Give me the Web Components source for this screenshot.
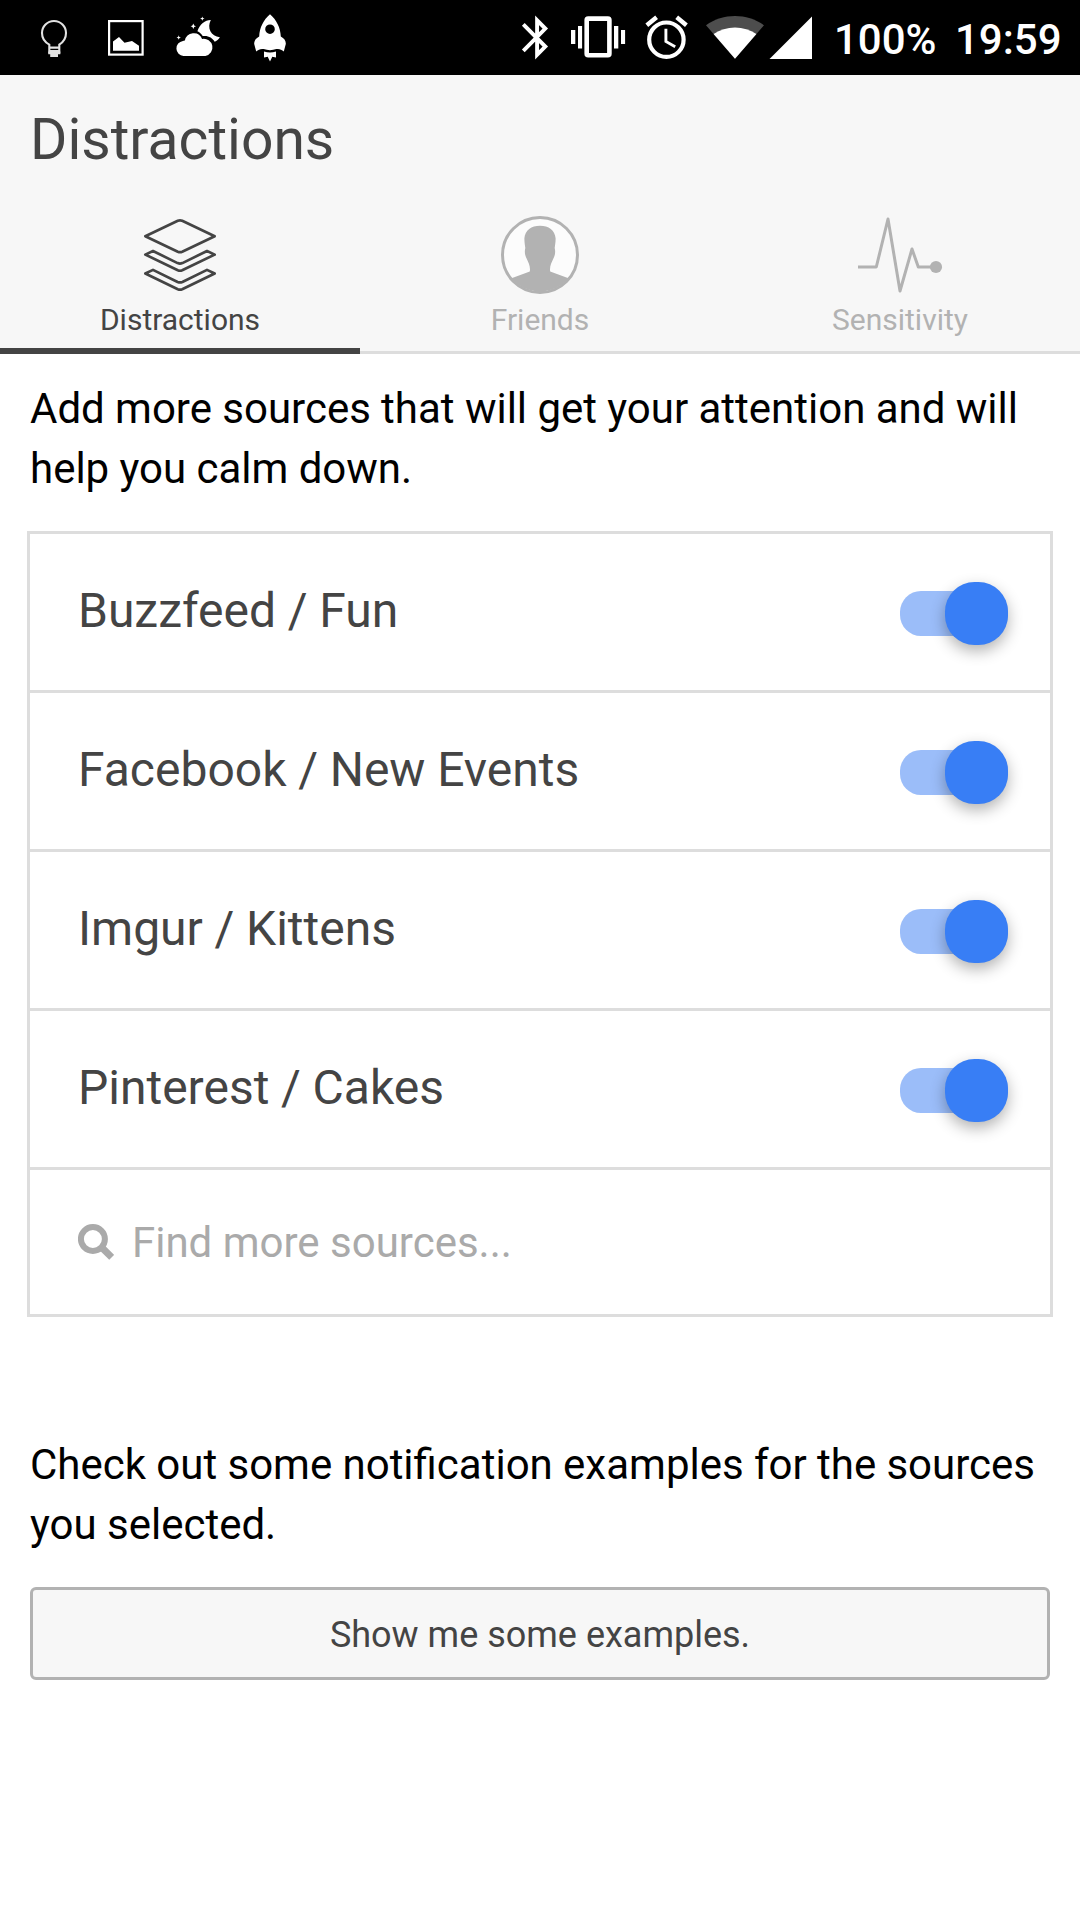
<!DOCTYPE html>
<html lang="en">
<head>
<meta charset="utf-8">
<title>Distractions</title>
<style>
html,body{margin:0;padding:0;background:#fff}
body{font-family:Roboto,"Noto Sans",sans-serif;color:#000}
</style>
</head>
<body>
<distractions-app></distractions-app>
<script>
// Icon table: [viewBox x, y, width, height, markup]
const ICONS = {
  bulb: [34,16,40,44,`<g fill="none" stroke="#e2e2e2" stroke-width="2.1"><path d="M49.3 53.5V44.6C45 42.3 42 38 42 33a12 12 0 0 1 24 0c0 5-3 9.300-6.700 11.600V53.500M49.300 47.600h10M49.300 51h10"/></g><path d="M48.300 51.500h12v2.800h-2.300v2.800h-7.800v-2.800h-1.900z" fill="#e2e2e2"/>`],
  image: [106,16,40,44,`<rect x="109.100" y="21.100" width="33.500" height="33.500" fill="none" stroke="#fff" stroke-width="2.200"/><path d="M113 50.700V41.500L119 37l5.500 5.800 7.500-1.800 7 4.700v5z" fill="#fff"/>`],
  weather: [174,14,48,46,`<g fill="#fff"><path d="M183.500 56a7.600 7.600 0 0 1-.6-15.100 5 5 0 0 1 2-.3 9 9 0 0 1 17.200-1.700 8.700 8.700 0 1 1 3.300 17.100z"/><path d="M210.800 20c-5.300-.2-11 4-13.400 11.300 2.200 1 4 2.500 5.300 4.800 5-.9 9.700 1.300 12 5.700 2-.9 3.900-2.500 5.200-4.600-9-.8-13.200-9.400-9.100-17.200z"/><path d="M202.300 16.500l.6 1.500 1.600.6-1.600.6-.6 1.500-.6-1.500-1.600-.6 1.600-.6zM193.300 23.500l.9 2 1.800.8-1.800.8-.9 2-.9-2-1.800-.8 1.800-.8zM178.700 35.300l.6 1.700 1.600.6-1.600.6-.6 1.600-.6-1.600-1.600-.6 1.600-.6z"/></g>`],
  rocket: [250,12,40,50,`<path fill="#fff" fill-rule="evenodd" d="M270 14.300c6.500 5.500 10.500 13.500 10.800 22.200 3.500 1.800 5.200 4.500 5 7.500l-2 7.400c-2.200-2-4.800-2.900-7.500-2.300-4 1.500-8.600 1.500-12.600 0-2.700-.6-5.300.3-7.500 2.300l-2-7.400c-.2-3 1.500-5.700 5-7.500.3-8.700 4.300-16.700 10.800-22.200zM270 24.400a4.800 4.800 0 1 0 0 9.600 4.800 4.800 0 0 0 0-9.600zM264 51.500c4 1.200 8 1.200 12 0v6l-3.700-.7-2.300 4.700-2.300-4.700-3.700.7z"/>`],
  bluetooth: [520,14,30,48,`<path fill="none" stroke="#fff" stroke-width="3.900" d="M523.300 24.300l22 22.300-8.200 8.200V20.300l8.200 8.200-22 22.400"/>`],
  vibrate: [568,14,60,48,`<rect x="586.700" y="18.600" width="22.700" height="36.600" rx="1.500" fill="none" stroke="#fff" stroke-width="4.600"/><path fill="#fff" d="M578 26h4.100v22.400H578zM571 30h4.300v14H571zM614 26h4.300v22.400H614zM621 30h4.100v14H621z"/>`],
  alarm: [644,14,46,48,`<g fill="none" stroke="#fff"><circle cx="666.400" cy="39.700" r="17.200" stroke-width="4.200"/><path stroke-width="2.900" d="M665.900 28.700v12.800l9.300 5.200"/><path stroke-width="4.400" d="M646.800 25.200l9.800-7.900M676.700 17.300l9.700 7.900"/></g>`],
  wifi: [704,14,62,48,`<path fill="#4d4d4d" d="M735 58.700L706 25.300C714.500 19 725 16 735 16s20.500 3 29 9.300z"/><path fill="#fff" d="M735 58.700L713.600 34c6.200-4.300 13.600-6.500 21.400-6.500s15.200 2.200 21.400 6.500z"/>`],
  signal: [768,14,46,48,`<path fill="#fff" d="M769.500 59L812 16.500V59z"/>`],
  layers: [135,212,90,84,`<g fill="none" stroke="currentColor" stroke-width="2.700" stroke-linejoin="round"><path d="M145.300 236.200l32.500-15.400q2.200-.8 4.400 0l32.500 15.400-32.500 15.500q-2.200.9-4.400 0z"/><path d="M145.300 254.600l7.700-3.600 24.600 12.100q2.400.9 4.800 0L207 251l7.700 3.600-32.500 15.700q-2.200.9-4.400 0z"/><path d="M145.300 273.500l7.700-3.600 24.600 12.100q2.400.9 4.800 0l24.600-12.100 7.700 3.600-32.500 15.700q-2.200.9-4.400 0z"/></g>`],
  person: [495,212,90,84,`<circle cx="540" cy="255" r="37.500" fill="#fcfcfc" stroke="currentColor" stroke-width="3"/><path fill="currentColor" d="M511.500 278.200l18.300-6.800c.8-5-1.200-8.400-3.200-12.900-1.600-3-2.300-6.200-1.300-10.500-.4-3.500-1-6.400-.9-9.800.6-7.900 7-12.500 15.600-12.500s15 4.600 15.600 12.500c.1 3.400-.5 6.300-.9 9.800 1 4.300.3 7.500-1.300 10.500-2 4.500-4 7.900-3.200 12.900l18.300 6.800A37.500 37.500 0 0 1 511.500 278.200z"/>`],
  pulse: [855,212,90,84,`<path fill="none" stroke="currentColor" stroke-width="3" stroke-linejoin="round" d="M858 267h18.300l11.700-48 12 72 12-42 6.300 18H936"/><circle cx="936" cy="267" r="6.100" fill="currentColor"/>`],
  search: [78,1224,36,36,`<circle cx="92.900" cy="1239" r="12" fill="none" stroke="currentColor" stroke-width="6"/><path stroke="currentColor" stroke-width="7" d="M101.500 1247.200l10.200 10.200"/>`]
};
const define = (name, html, setup) => customElements.define(name, class extends HTMLElement {
  constructor() { super(); this.attachShadow({mode: 'open'}); }
  connectedCallback() {
    this.shadowRoot.innerHTML = html;
    if (setup) setup(this, this.shadowRoot);
  }
});

define('app-icon', `<style>:host{display:block;flex:none}svg{display:block}</style><div></div>`, (el, root) => {
  const [x, y, w, h, body] = ICONS[el.getAttribute('name')];
  root.querySelector('div').innerHTML = `<svg width="${w}" height="${h}" viewBox="${x} ${y} ${w} ${h}">${body}</svg>`;
});

define('status-bar', `<style>
:host{display:flex;align-items:flex-start;box-sizing:border-box;height:75px;background:#000;color:#fff;padding-left:34px;font-size:42px;font-weight:500;line-height:48px}
app-icon{margin-top:14px}
app-icon[name=bulb]{margin-top:16px}app-icon[name=image]{margin:16px 28px 0 32px}app-icon[name=rocket]{margin:12px 230px 0 28px}
app-icon[name=vibrate]{margin-left:18px}app-icon[name=alarm]{margin-left:16px}app-icon[name=wifi]{margin-left:14px}app-icon[name=signal]{margin-left:2px}
span{margin-top:16px;white-space:nowrap}
.battery{margin-left:20px;width:121px}
</style>
<app-icon name="bulb"></app-icon><app-icon name="image"></app-icon><app-icon name="weather"></app-icon><app-icon name="rocket"></app-icon>
<app-icon name="bluetooth"></app-icon><app-icon name="vibrate"></app-icon><app-icon name="alarm"></app-icon><app-icon name="wifi"></app-icon><app-icon name="signal"></app-icon>
<span class="battery">100%</span><span>19:59</span>`);

define('page-title', `<style>:host{display:block;height:129px;line-height:129px;padding-left:30px;background:#f7f7f7;color:#444;font-size:57px}</style><slot></slot>`);

define('tab-bar', `<style>:host{display:flex;box-sizing:border-box;height:150px;background:#f7f7f7;box-shadow:inset 0 -3px #ddd}::slotted(*){flex:1}</style><slot></slot>`);

define('tab-item', `<style>
:host{display:flex;flex-direction:column;align-items:center;box-sizing:border-box;padding-top:8px;color:#b2b2b2;font-size:30px;line-height:36px}
:host([active]){color:#444;border-bottom:6px solid #444}
.label{margin-top:6px}
</style><div class="icon"></div><div class="label"><slot></slot></div>`, (el, root) => {
  root.querySelector('.icon').innerHTML = `<app-icon name="${el.getAttribute('icon')}"></app-icon>`;
});

define('toggle-switch', `<style>
:host{display:flex;align-items:center;justify-content:flex-end;width:108px;height:45px;border-radius:21px;background:#9bbdf9}
i{display:block;flex:none;width:63px;height:63px;border-radius:29.5px;background:#387ef5;box-shadow:0 6px 15px rgba(0,0,0,.3)}
</style><i></i>`);

define('source-item', `<style>
:host{display:flex;align-items:center;justify-content:space-between;box-sizing:border-box;height:159px;border-bottom:3px solid #ddd;padding:0 42px 0 48px;color:#444;font-size:48px;line-height:60px;word-spacing:-.2px}
span{margin-bottom:2px}toggle-switch{margin-top:3px}
</style><span><slot></slot></span><toggle-switch></toggle-switch>`);

define('source-search', `<style>
:host{display:flex;align-items:center;height:144px;padding-left:48px;color:#aaa;font-size:42px;line-height:60px}
div{margin:2px 0 0 18px}
</style><app-icon name="search"></app-icon><div><slot></slot></div>`);

define('source-list', `<style>:host{display:block;margin:0 27px;border:3px solid #ddd}</style><slot></slot>`);

define('body-text', `<style>:host{display:block;padding:0 30px;font-size:42px;line-height:60px;white-space:nowrap;word-spacing:-.12px}</style><slot></slot>`);

define('action-button', `<style>
:host{display:block;box-sizing:border-box;margin:0 30px;height:93px;border:3px solid #b2b2b2;border-radius:6px;background:#f7f7f7;color:#444;font-size:36px;line-height:90px;text-align:center}
</style><slot></slot>`);

define('distractions-app', `<style>
:host{display:block;width:1080px;height:1920px;background:#fff;overflow:hidden}
.intro{padding-top:25px;height:152px}
.check{margin-top:118px;height:152px}
</style>
<status-bar></status-bar>
<page-title>Distractions</page-title>
<tab-bar>
<tab-item icon="layers" active>Distractions</tab-item>
<tab-item icon="person">Friends</tab-item>
<tab-item icon="pulse">Sensitivity</tab-item>
</tab-bar>
<body-text class="intro">Add more sources that will get your attention and will<br>help you calm down.</body-text>
<source-list>
<source-item>Buzzfeed / Fun</source-item>
<source-item>Facebook / New Events</source-item>
<source-item>Imgur / Kittens</source-item>
<source-item>Pinterest / Cakes</source-item>
<source-search>Find more sources...</source-search>
</source-list>
<body-text class="check">Check out some notification examples for the sources<br>you selected.</body-text>
<action-button>Show me some examples.</action-button>`);
</script>
</body>
</html>
